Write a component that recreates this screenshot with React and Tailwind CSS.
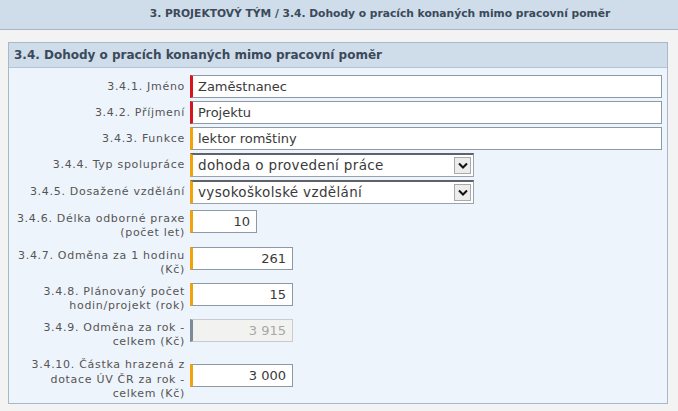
const rows = [
  { label: ["3.4.1. Jméno"], value: "Zaměstnanec", kind: "text", mark: "red", mt: "mt-0" },
  { label: ["3.4.2. Příjmení"], value: "Projektu", kind: "text", mark: "red", mt: "mt-[3px]" },
  { label: ["3.4.3. Funkce"], value: "lektor romštiny", kind: "text", mark: "orange", mt: "mt-[3px]" },
  { label: ["3.4.4. Typ spolupráce"], value: "dohoda o provedení práce", kind: "select", mark: "orange", mt: "mt-[3px]" },
  { label: ["3.4.5. Dosažené vzdělání"], value: "vysokoškolské vzdělání", kind: "select", mark: "orange", mt: "mt-[3px]" },
  { label: ["3.4.6. Délka odborné praxe", "(počet let)"], value: "10", kind: "short", mark: "orange", mt: "mt-[6px]" },
  { label: ["3.4.7. Odměna za 1 hodinu", "(Kč)"], value: "261", kind: "num", mark: "orange", mt: "mt-[8px]" },
  { label: ["3.4.8. Plánovaný počet", "hodin/projekt (rok)"], value: "15", kind: "num", mark: "orange", mt: "mt-[7px]" },
  { label: ["3.4.9. Odměna za rok -", "celkem (Kč)"], value: "3 915", kind: "disabled", mark: "gray", mt: "mt-[7px]" },
  { label: ["3.4.10. Částka hrazená z", "dotace ÚV ČR za rok -", "celkem (Kč)"], value: "3 000", kind: "num", mark: "orange", mt: "mt-[10px]", tall: true },
];

const markColor = {
  red: "border-l-[#d7141c]",
  orange: "border-l-[#f0a30a]",
  gray: "border-l-[#7c8b9a]",
};

const Field = ({ row }) => {
  if (row.kind === "select") {
    return (
      <div className={`w-[284px] h-[24px] flex items-center bg-white border border-[#9aa3ad] border-t-2 border-t-[#5f6368] border-l-[3px] ${markColor[row.mark]}`}>
        <span className="flex-1 pl-[5px] text-[13.5px] text-[#3a3a3a] tracking-[0.35px] whitespace-nowrap">{row.value}</span>
        <span className="w-[17px] h-[17px] mr-[2px] flex items-center justify-center bg-[#ececec] border border-[#a9a9a9]">
          <svg width="10" height="7" viewBox="0 0 10 7">
            <path d="M1 1.5 L5 5.5 L9 1.5" fill="none" stroke="#111" strokeWidth="2" />
          </svg>
        </span>
      </div>
    );
  }
  const width =
    row.kind === "text" ? "w-[472px]" : row.kind === "short" ? "w-[67px]" : "w-[103px]";
  const align = row.kind === "text" ? "text-left pl-[5px]" : "text-right pr-[6px]";
  const look =
    row.kind === "disabled"
      ? "bg-[#f2f2f0] text-[#a8a8a8] border-[#c8ccd0]"
      : "bg-white text-[#3a3a3a] border-[#8d99a6]";
  return (
    <div className={`${width} h-[23px] flex items-center border border-l-[3px] ${markColor[row.mark]} ${look} ${align}`}>
      <span className="flex-1 text-[13px] whitespace-nowrap">{row.value}</span>
    </div>
  );
};

const Row = ({ row }) => {
  const multi = row.label.length > 1;
  return (
    <div className={`flex ${multi ? "items-start" : "items-center"} ${row.mt}`}>
      <div
        className={`w-[181px] pr-[5px] text-right text-[11px] text-[#555] tracking-[0.7px] whitespace-nowrap ${
          row.tall ? "leading-[14.5px]" : "leading-[13.5px]"
        } ${multi && !row.tall ? "pt-[2px]" : ""}`}
      >
        {row.label.map((l, i) => (
          <div key={i}>{l}</div>
        ))}
      </div>
      <div className={row.tall ? "mt-[6px]" : ""}>
        <Field row={row} />
      </div>
    </div>
  );
};

export default function App() {
  return (
    <div className="w-[678px] h-[411px] bg-[#f3f3f3] overflow-hidden" style={{ fontFamily: '"DejaVu Sans", Verdana, sans-serif' }}>
      <div className="h-[30px] bg-[#cfdce9] border-b border-[#a9b7c5] flex items-center justify-center pl-[82px]">
        <h1 className="text-[10.7px] font-bold text-[#3b4a5a]">
          3. PROJEKTOVÝ TÝM / 3.4. Dohody o pracích konaných mimo pracovní poměr
        </h1>
      </div>
      <div className="mx-[8px] mt-[12px] w-[660px] border border-[#a9b8c7] bg-[#eef4fb]">
        <div className="h-[25px] bg-[#cfdce9] border-b border-[#b5c3d1] flex items-center pl-[5px]">
          <h2 className="text-[12px] font-bold text-[#3b4a5a]">
            3.4. Dohody o pracích konaných mimo pracovní poměr
          </h2>
        </div>
        <div className="pt-[7px] pb-[1px]">
          {rows.map((r, i) => (
            <Row key={i} row={r} />
          ))}
        </div>
      </div>
    </div>
  );
}
